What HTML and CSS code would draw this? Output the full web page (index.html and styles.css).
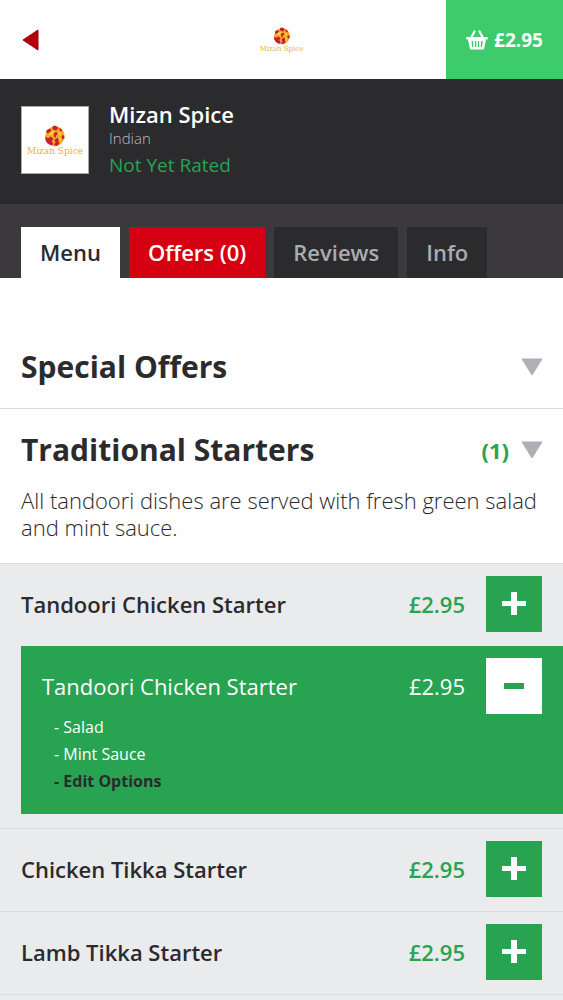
FILE: index.html
```html
<!DOCTYPE html>
<html lang="en">
<head>
<meta charset="utf-8">
<meta name="viewport" content="width=device-width, initial-scale=1">
<title>Mizan Spice</title>
<link rel="stylesheet" href="styles.css">
</head>
<body>
<svg class="defs" aria-hidden="true">
  <symbol id="emblem" viewBox="0 0 40 40">
    <path d="M12 4l5 1 3-4 7 3 4 2 4 5 2 6 1 6-3 6-4 5-6 4-6 1-7-2-6-4-3-6-1-7 2-6 3-6z" fill="#f4a62a"/>
    <path d="M15 3l4-2 5 2 2 3-4 4-6-2zM28 5l5 4-1 3-4-2zM4 10l6-3 4 2-3 5-6 1zM18 14l6-1 1 4-4 2 1 4-4-2zM2 22l6 2 4-3 5 4-3 4 3 6-4 2-7-4-3-5zM19 27l6-4 3 3-2 4 2 4-5 4-5-2 3-4zM32 18l4 1 1 5-4 2z" fill="#c41f2c"/>
    <path d="M9 15l5-5 5 2-4 6-6 1zM26 12l5 2 1 6-6-2zM26 21l5 4-1 5-4-4z" fill="#fccb3c"/>
  </symbol>
  <symbol id="triangle" viewBox="0 0 22 18">
    <path d="M1 1h20L11 17z" fill="#adb1b5" stroke="#adb1b5" stroke-width="1" stroke-linejoin="round"/>
  </symbol>
  <symbol id="plus" viewBox="0 0 24 24">
    <path d="M9 0h6v9h9v5h-9v9H9v-9H0V9h9z" fill="currentColor"/>
  </symbol>
  <symbol id="minus" viewBox="0 0 24 24">
    <path d="M2 9h20v6H2z" fill="currentColor"/>
  </symbol>
</svg>

<header class="topbar">
  <button class="back" aria-label="Back">
    <svg width="18" height="22" viewBox="0 0 18 22"><path d="M2 11L17 1V21z" fill="#b5000d" stroke="#99000b" stroke-width="1" stroke-linejoin="round"/></svg>
  </button>
  <a class="brand brand-small" href="#menu">
    <svg class="emblem"><use href="#emblem"/></svg>
    <span>Mizan Spice</span>
  </a>
  <button class="basket">
    <svg width="22" height="20" viewBox="0 0 22 20" aria-hidden="true">
      <path d="M5 8L8.500 1.500M17 8L13.500 1.500" stroke="#fff" stroke-width="2.200" stroke-linecap="round"/>
      <path fill-rule="evenodd" d="M1 7h20q1 0 1 1.200T21 9.500h-1L18.300 18q-.3 1.500-1.800 1.500h-11Q4 19.500 3.700 18L2 9.500H1Q0 9.500 0 8.200T1 7zM5.500 11l.7 6h1.300l-.4-6zM9 11v6h1.300v-6zM11.900 11v6h1.300v-6zM15.100 11l-.4 6H16l.7-6z" fill="#fff"/>
    </svg>
    <span>£2.95</span>
  </button>
</header>

<section class="restaurant">
  <div class="brand logo">
    <svg class="emblem"><use href="#emblem"/></svg>
    <span>Mizan Spice</span>
  </div>
  <div class="info">
    <h1 class="name">Mizan Spice</h1>
    <p class="cuisine">Indian</p>
    <p class="rating">Not Yet Rated</p>
  </div>
</section>

<nav class="tabs">
  <a class="tab tab-active" href="#menu">Menu</a>
  <a class="tab tab-offers" href="#offers">Offers (0)</a>
  <a class="tab" href="#reviews">Reviews</a>
  <a class="tab" href="#info">Info</a>
</nav>

<main class="menu" id="menu">
  <section class="category">
    <button class="category-head">
      <span class="category-title">Special Offers</span>
      <svg class="arrow"><use href="#triangle"/></svg>
    </button>
  </section>
  <section class="category">
    <button class="category-head">
      <span class="category-title">Traditional Starters</span>
      <span class="count">(1)</span>
      <svg class="arrow"><use href="#triangle"/></svg>
    </button>
    <p class="description">All tandoori dishes are served with fresh green salad and mint sauce.</p>
  </section>

  <ul class="items">
    <li class="item">
      <div class="row">
        <span class="item-name">Tandoori Chicken Starter</span>
        <span class="price">£2.95</span>
        <button class="step" aria-label="Add Tandoori Chicken Starter"><svg class="sign"><use href="#plus"/></svg></button>
      </div>
      <div class="selected">
        <div class="row">
          <span class="item-name">Tandoori Chicken Starter</span>
          <span class="price">£2.95</span>
          <button class="step step-remove" aria-label="Remove Tandoori Chicken Starter"><svg class="sign"><use href="#minus"/></svg></button>
        </div>
        <ul class="options">
          <li>- Salad</li>
          <li>- Mint Sauce</li>
          <li><a class="edit" href="#edit">- Edit Options</a></li>
        </ul>
      </div>
    </li>
    <li class="item">
      <div class="row">
        <span class="item-name">Chicken Tikka Starter</span>
        <span class="price">£2.95</span>
        <button class="step" aria-label="Add Chicken Tikka Starter"><svg class="sign"><use href="#plus"/></svg></button>
      </div>
    </li>
    <li class="item">
      <div class="row">
        <span class="item-name">Lamb Tikka Starter</span>
        <span class="price">£2.95</span>
        <button class="step" aria-label="Add Lamb Tikka Starter"><svg class="sign"><use href="#plus"/></svg></button>
      </div>
    </li>
  </ul>
</main>
</body>
</html>
```
FILE: styles.css
```css
* {
  box-sizing: border-box;
}

body {
  display: flex;
  flex-direction: column;
  min-height: 100vh;
  margin: 0;
  background: #fefefe;
  color: #2b2a2d;
  font-family: "Open Sans", "Noto Sans", sans-serif;
  font-size: 22px;
}

h1, p, ul {
  margin: 0;
  padding: 0;
}

ul {
  list-style: none;
}

a {
  color: inherit;
  text-decoration: none;
}

button {
  border: 0;
  padding: 0;
  background: none;
  color: inherit;
  font: inherit;
  cursor: pointer;
}

svg {
  display: block;
}

.defs {
  display: none;
}

.topbar {
  display: grid;
  grid-template-columns: 117px 1fr 117px;
  align-items: center;
  height: 79px;
}

.back {
  justify-self: start;
  padding: 8px 21px;
}

.brand {
  display: flex;
  flex-direction: column;
  align-items: center;
  color: #e9b13c;
  font-family: "DejaVu Serif", serif;
  white-space: nowrap;
}

.brand-small {
  font-size: 7px;
  line-height: 8px;
}

.brand-small .emblem {
  width: 18px;
  height: 18px;
}

.basket {
  display: flex;
  align-items: center;
  justify-content: center;
  gap: 6px;
  height: 100%;
  background: #3dcb6c;
  color: #fff;
  font-size: 19px;
  font-weight: 700;
}

.restaurant {
  display: flex;
  align-items: flex-start;
  gap: 20px;
  padding: 21px 21px 21px;
  background: #2b2a2c;
}

.logo {
  justify-content: center;
  width: 68px;
  height: 68px;
  margin-top: 6px;
  border: 1px solid #a9a9aa;
  background: #fff;
  font-size: 9px;
  line-height: 8px;
}

.logo .emblem {
  width: 22px;
  height: 22px;
}

.name {
  color: #fff;
  font-size: 22px;
  font-weight: 600;
  line-height: 28px;
}

.cuisine {
  color: #bdbdbf;
  font-size: 15px;
  font-weight: 300;
  line-height: 20px;
}

.rating {
  color: #27a351;
  font-size: 19px;
  line-height: 35px;
}

.tabs {
  display: flex;
  gap: 9px;
  padding: 23px 21px 0;
  background: #3b393c;
}

.tab {
  padding: 0 19px;
  background: #2b2a2c;
  color: #a9adaf;
  font-weight: 600;
  line-height: 51px;
}

.tab-active {
  background: #fff;
  color: #2b2a2d;
}

.tab-offers {
  background: #d50012;
  color: #fff;
}

.menu {
  display: flex;
  flex: 1;
  flex-direction: column;
}

.category {
  padding-top: 4px;
  border-bottom: 1px solid #d9dadf;
}

.category:first-child {
  padding: 52px 0 4px;
}

.category-head {
  display: flex;
  align-items: center;
  width: 100%;
  padding: 0 20px 0 21px;
  text-align: left;
  line-height: 74px;
}

.category-title {
  flex: 1;
  font-size: 30px;
  font-weight: 700;
}

.count {
  margin-right: 12px;
  color: #27a351;
  font-weight: 700;
}

.arrow {
  width: 22px;
  height: 18px;
}

.description {
  padding: 0 21px 22px;
  font-weight: 300;
  line-height: 27px;
}

.items {
  flex: 1;
  background: #e9ebec;
}

.item {
  border-bottom: 1px solid #d8dbdd;
}

.row {
  display: flex;
  align-items: center;
  padding: 12px 21px 14px;
}

.item-name {
  flex: 1;
  font-weight: 600;
}

.price {
  margin-right: 21px;
  color: #27a351;
  font-weight: 600;
}

.step {
  display: grid;
  place-items: center;
  width: 56px;
  height: 56px;
  background: #27a351;
  color: #fff;
}

.sign {
  width: 24px;
  height: 24px;
}

.selected {
  margin: 0 0 14px 21px;
  padding-bottom: 19px;
  background: #27a351;
  color: #fff;
}

.selected .row {
  padding-bottom: 0;
}

.selected .item-name,
.selected .price {
  color: #fff;
  font-weight: 400;
}

.step-remove {
  background: #fff;
  color: #27a351;
}

.options {
  padding-left: 33px;
  font-size: 16px;
  line-height: 27px;
}

.edit {
  color: #2b2a2d;
  font-weight: 700;
}
```
